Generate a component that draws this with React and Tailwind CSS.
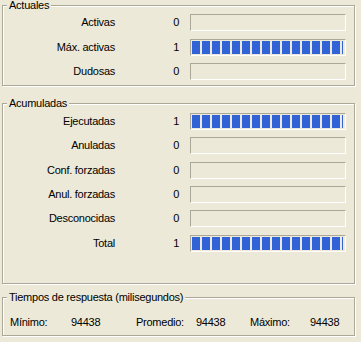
const BLOCKS = 15;

const actuales = [
  { label: 'Activas', value: 0, mt: 'mt-[8px]' },
  { label: 'Máx. activas', value: 1, mt: 'mt-[8px]' },
  { label: 'Dudosas', value: 0, mt: 'mt-[7px]' },
];

const acumuladas = [
  { label: 'Ejecutadas', value: 1, mt: 'mt-[9px]' },
  { label: 'Anuladas', value: 0, mt: 'mt-[7px]' },
  { label: 'Conf. forzadas', value: 0, mt: 'mt-[8px]' },
  { label: 'Anul. forzadas', value: 0, mt: 'mt-[7px]' },
  { label: 'Desconocidas', value: 0, mt: 'mt-[7px]' },
  { label: 'Total', value: 1, mt: 'mt-[8px]' },
];

function Group({ title, className, children }) {
  return (
    <div
      className={`relative w-[353px] border border-[#aca899] shadow-[inset_1px_1px_0_#fff,1px_1px_0_#fff] ${className}`}
    >
      <span className="absolute -top-[7px] left-[4px] bg-[#ece9d8] px-[2px] leading-[13px]">{title}</span>
      {children}
    </div>
  );
}

function Bar({ full }) {
  return (
    <div className="ml-[11px] flex h-[17px] w-[156px] items-center gap-[2px] border border-t-[#aca899] border-l-[#aca899] border-b-white border-r-white pl-px">
      {full && (
        <>
          {Array.from({ length: BLOCKS }).map((_, i) => (
            <div key={i} className="h-[13px] w-[8px] bg-[#3163d6]" />
          ))}
          <div className="h-[13px] w-px bg-[#3163d6]" />
        </>
      )}
    </div>
  );
}

function Row({ label, value, mt }) {
  return (
    <div className={`flex items-center ${mt}`}>
      <span className="w-[112px] text-right leading-[13px]">{label}</span>
      <span className="w-[64px] text-right leading-[13px]">{value}</span>
      <Bar full={value > 0} />
    </div>
  );
}

export default function App() {
  return (
    <div className="h-[342px] w-[361px] bg-[#ece9d8] pl-[2px] pt-[5px] font-['Liberation_Sans',Arial,sans-serif] text-[11px] tracking-[-0.25px] text-black">
      <Group title="Actuales" className="h-[81px]">
        {actuales.map((r) => (
          <Row key={r.label} {...r} />
        ))}
      </Group>

      <Group title="Acumuladas" className="mt-[17px] h-[181px]">
        {acumuladas.map((r) => (
          <Row key={r.label} {...r} />
        ))}
      </Group>

      <Group title="Tiempos de respuesta (milisegundos)" className="mt-[13px] h-[39px]">
        <div className="mt-[18px] flex pl-[7px] leading-[13px]">
          <span className="w-[61px]">Mínimo:</span>
          <span className="w-[65px]">94438</span>
          <span className="w-[60px]">Promedio:</span>
          <span className="w-[54px]">94438</span>
          <span className="w-[60px]">Máximo:</span>
          <span>94438</span>
        </div>
      </Group>
    </div>
  );
}
